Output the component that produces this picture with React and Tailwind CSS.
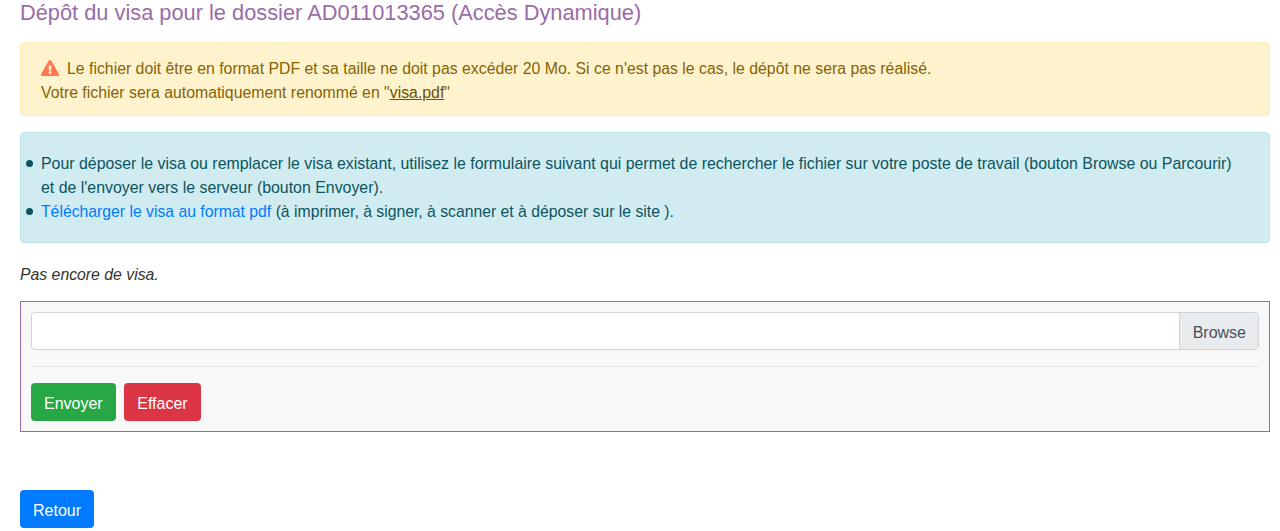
import { useRef } from "react";

function WarningIcon() {
  return (
    <svg viewBox="0 0 576 512" className="mr-2 inline-block h-4 w-[18px] align-[-2px]" fill="#ff7850" aria-hidden="true">
      <path d="M569.5 440 329.6 24c-18.4-32-64.7-32-83.2 0L6.5 440c-18.4 31.9 4.6 72 41.6 72h479.8c36.9 0 60-40 41.6-72zM288 354c25.4 0 46 20.6 46 46s-20.6 46-46 46-46-20.6-46-46 20.6-46 46-46zm-43.7-165.3c-.4-7 5.1-12.7 12-12.7h63.4c6.9 0 12.4 5.8 12 12.7l-7.2 132c-.3 6.4-5.6 11.3-12 11.3h-49c-6.4 0-11.6-5-12-11.3l-7.2-132z" />
    </svg>
  );
}

function Bullet({ className, children }) {
  return (
    <li className={`relative ${className}`}>
      <span className="absolute -left-[15px] top-2 h-[7px] w-[7px] rounded-full bg-[#0c5460]" />
      {children}
    </li>
  );
}

export default function App() {
  const fileInput = useRef(null);

  return (
    <div className="h-[531px] overflow-hidden bg-white pl-5 pr-2.5 font-['Liberation_Sans',Arial,sans-serif] text-[15.8px] leading-6 text-[#333333]">
      <h4 className="h-[42px] pt-px text-[21.8px] leading-6 text-[#9b6ba8]">
        Dépôt du visa pour le dossier AD011013365 (Accès Dynamique)
      </h4>

      <div className="mb-4 rounded border border-[#ffeeba] bg-[#fff3cd] px-5 pb-2.5 pt-3.5 text-[15.84px] text-[#856404]">
        <WarningIcon />
        Le fichier doit être en format PDF et sa taille ne doit pas excéder 20 Mo. Si ce n'est pas le cas, le dépôt ne sera pas réalisé.
        <br />
        Votre fichier sera automatiquement renommé en "<a href="#visa" className="text-[#6b5103] underline">visa.pdf</a>"
      </div>

      <div className="mb-[19px] rounded border border-[#bee5eb] bg-[#d1ecf1] pb-[18px] pl-5 pr-5 pt-[19px] text-[#0c5460]">
        <ul>
          <Bullet className="text-[15.9px]">
            Pour déposer le visa ou remplacer le visa existant, utilisez le formulaire suivant qui permet de rechercher le fichier sur votre poste de travail (bouton Browse ou Parcourir)
            <br />
            et de l'envoyer vers le serveur (bouton Envoyer).
          </Bullet>
          <Bullet className="text-[15.75px]">
            <a href="#telecharger" className="text-[#007bff]">Télécharger le visa au format pdf</a> (à imprimer, à signer, à scanner et à déposer sur le site ).
          </Bullet>
        </ul>
      </div>

      <p className="mb-[15px] pt-px italic leading-[23px]">Pas encore de visa.</p>

      <form className="border border-[#9b6ba8] bg-[#f8f8f8] p-2.5 text-base" onSubmit={(event) => event.preventDefault()}>
        <label className="flex h-[38px] cursor-pointer overflow-hidden rounded border border-[#ced4da] bg-white">
          <input ref={fileInput} type="file" className="hidden" />
          <span className="flex-1" />
          <span className="flex items-center border-l border-[#ced4da] bg-[#e9ecef] pl-[13px] pr-3 pt-1 text-[#495057]">Browse</span>
        </label>
        <hr className="my-4 border-[#e5e5e5]" />
        <div className="flex gap-2">
          <button type="submit" className="h-[38px] rounded bg-[#28a745] px-[13px] pt-1 text-white">Envoyer</button>
          <button type="reset" className="h-[38px] rounded bg-[#dc3545] px-[13.5px] pt-1 text-white">Effacer</button>
        </div>
      </form>

      <button type="button" className="mt-[58px] h-[38px] rounded bg-[#007bff] px-[13px] pt-1 text-base text-white">Retour</button>
    </div>
  );
}
